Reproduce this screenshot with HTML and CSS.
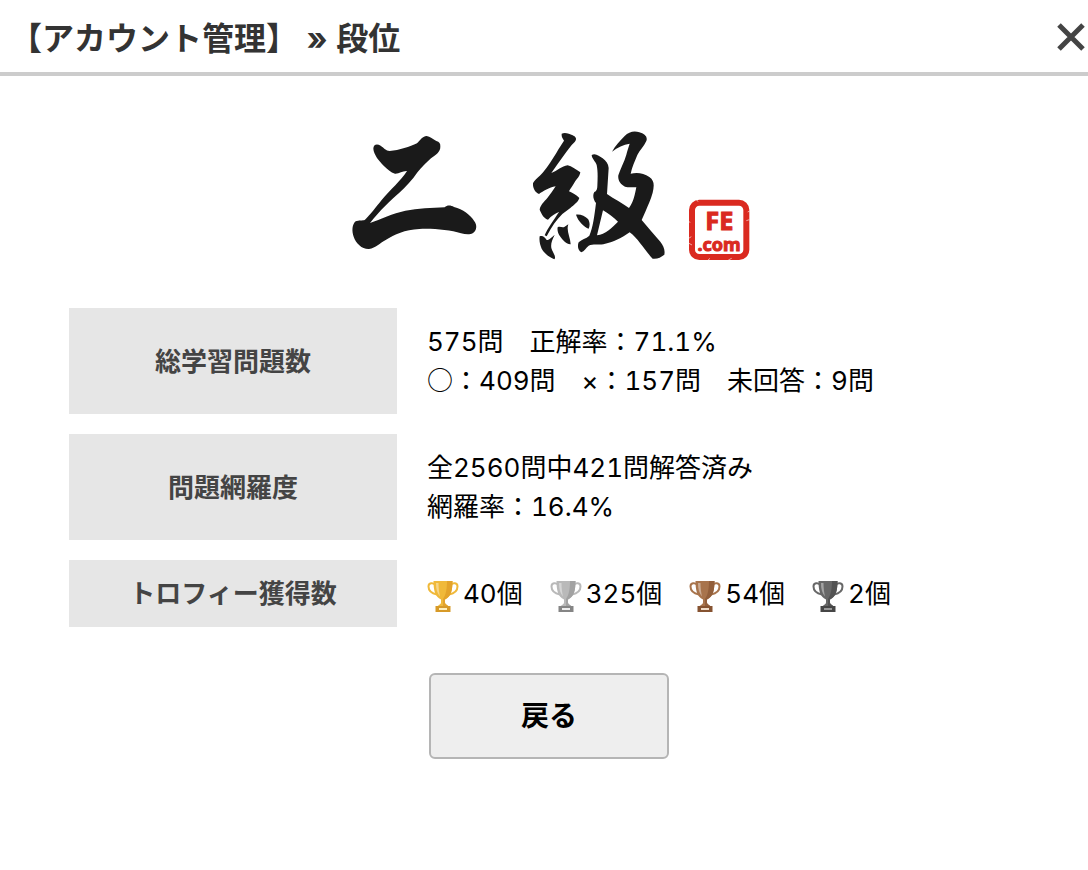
FILE: index.html
```html
<!DOCTYPE html>
<html lang="ja">
<head>
<meta charset="utf-8">
<title>段位</title>
<link rel="stylesheet" href="styles.css">
</head>
<body>
<svg class="defs" aria-hidden="true">
  <symbol id="trophy" viewBox="0 0 32 34">
    <path d="M8 5.500C6 3.500 1.500 3.500 1.500 7.500C1.500 12 5 14.500 10 15.500M24 5.500C26 3.500 30.500 3.500 30.500 7.500C30.500 12 27 14.500 22 15.500" fill="none" stroke="var(--cup)" stroke-width="2"/>
    <path d="M6.500 2H25.500C25.500 11 24 18 18 20.500V23.500C18 25.500 21 26 22 28H10C11 26 14 25.500 14 23.500V20.500C8 18 6.500 11 6.500 2Z" fill="var(--cup)"/>
    <path d="M20 2H25.500C25.500 11 24 18 18 20.500V23.500C18 25.500 21 26 22 28H16V20C19 16 20 9 20 2Z" fill="var(--shade)"/>
    <path d="M9 4C9 10 10 14 13 17.500C12 13 11.500 9 11.500 4Z" fill="#fff" opacity=".4"/>
    <path d="M8.500 27H23.500V33H8.500Z" fill="var(--base)"/>
    <path d="M12 29H20V31H12Z" fill="var(--plate)"/>
  </symbol>
</svg>
<header class="header">
  <h1 class="title">【アカウント管理】 » 段位</h1>
  <button class="close" type="button" aria-label="閉じる">
    <svg viewBox="0 0 28 28" width="28" height="28"><path d="M2 2L26 26M26 2L2 26" stroke="#444" stroke-width="5"/></svg>
  </button>
</header>
<main class="main">
  <svg class="rank" viewBox="0 0 1254 450" role="img" aria-label="二級">
    <g fill="#1a1a1a">
      <path d="M100 86C100 74 110 70 122 77C133 84 137 92 149 93C178 91 210 80 231 70C240 62 246 49 260 48C270 50 279 58 289 63C298 66 302 70 301 80C301 96 288 104 273 115C259 128 246 140 233 156C216 181 197 201 178 218C151 242 119 271 90 309C122 298 158 280 196 272C234 265 275 264 314 262C322 254 333 256 342 261C369 267 391 285 402 302C413 316 410 332 398 340C389 345 375 343 363 340C330 330 280 325 238 327C194 329 164 344 137 360C119 369 108 384 87 387C66 388 48 370 41 350C35 334 36 313 47 304C56 299 68 303 75 299C90 285 108 261 125 240C150 210 184 180 201 153C187 152 178 162 165 161C152 157 142 147 131 137C118 124 101 104 100 86Z"/>
      <g transform="translate(540 0)">
        <path d="M125 41C136 36 148 42 158 46C169 51 171 58 164 66C151 78 143 91 134 103C121 121 107 140 94 159C112 153 125 138 143 136C155 138 167 148 181 157C179 170 170 177 163 188C158 197 151 206 147 214C157 219 169 224 178 234C174 247 162 254 151 264L127 282C110 298 95 320 80 349L74 346C82 326 101 301 117 276C106 280 94 288 84 299C74 297 65 284 59 269C61 256 72 245 82 234C91 223 99 211 107 199C87 202 70 214 57 222C45 218 38 204 39 190C44 178 57 171 68 158C85 139 97 118 109 99C117 84 125 73 132 62C130 56 124 53 125 41Z"/>
        <path d="M59 349C68 345 75 352 80 360C88 361 94 352 104 345C96 360 92 371 94 384C98 398 110 410 103 418C89 412 74 402 65 386C60 374 57 361 59 349ZM113 322C120 317 127 325 134 320L145 313C138 331 151 351 152 373C140 374 129 361 120 349C115 342 111 331 113 322ZM168 284C182 282 195 289 204 297C210 306 210 318 206 326C192 321 174 303 168 284Z"/>
        <path fill-rule="evenodd" d="M215 105C226 98 238 108 248 115C258 122 265 132 266 144L261 222C283 238 307 249 327 264C341 246 345 221 349 202C337 201 325 203 315 200C301 193 293 180 295 166C300 148 313 126 319 104C322 91 326 81 329 71C310 73 293 82 276 95C286 76 301 62 314 48C326 36 342 31 358 37C373 41 384 50 379 63C372 79 359 91 352 105C345 123 336 140 332 161C349 157 371 158 388 171C405 183 402 199 398 218C392 240 383 257 377 273L365 300C384 322 402 344 421 365C430 377 436 389 433 404C423 412 411 418 398 416C373 390 355 356 329 337C305 354 281 366 250 373C235 375 219 371 206 377C198 384 193 393 184 397C175 392 171 379 176 367C185 358 198 356 208 347C219 323 223 289 228 249C220 240 217 224 223 216C230 214 232 207 232 198C233 175 234 154 230 135C226 123 216 117 215 105ZM249 271L231 346C256 343 276 323 294 305C281 292 265 280 249 271Z"/>
      </g>
    </g>
    <g transform="translate(1020 210)">
      <rect x="36" y="38" width="163" height="163" rx="22" fill="none" stroke="#da2a20" stroke-width="18"/>
      <path d="M26 95L31 97M26 145L34 140M27 160L36 165M49 28L54 35M203 66L209 63M199 92L208 89M145 210L155 205M82 212L90 205" stroke="#fff" stroke-width="3" opacity=".6"/>
      <text class="seal"><tspan x="118" y="120">FE</tspan><tspan class="seal-small" x="117" y="182">.com</tspan></text>
    </g>
  </svg>
  <table class="stats">
    <tr><th scope="row">総学習問題数</th><td>575問　正解率：71.1%<br><span class="mark">○</span>：409問　×：157問　未回答：9問</td></tr>
    <tr><th scope="row">問題網羅度</th><td>全2560問中421問解答済み<br>網羅率：16.4%</td></tr>
    <tr><th scope="row">トロフィー獲得数</th><td>
      <ul class="trophies">
        <li class="trophy gold"><svg><use href="#trophy"/></svg>40個</li>
        <li class="trophy silver"><svg><use href="#trophy"/></svg>325個</li>
        <li class="trophy bronze"><svg><use href="#trophy"/></svg>54個</li>
        <li class="trophy black"><svg><use href="#trophy"/></svg>2個</li>
      </ul>
    </td></tr>
  </table>
  <button class="back" type="button">戻る</button>
</main>
</body>
</html>
```
FILE: styles.css
```css
* { box-sizing: border-box; }
body {
  margin: 0;
  background: #fff;
  color: #000;
  font-family: Inter, "Noto Sans CJK JP", sans-serif;
  font-variant-numeric: tabular-nums;
}
.defs { display: none; }
.header {
  display: flex;
  align-items: center;
  justify-content: space-between;
  height: 76px;
  padding: 2px 3px 0 10px;
  border-bottom: 4px solid #ccc;
}
.title {
  margin: 0;
  padding-top: 4px;
  color: #333;
  font-size: 32px;
  line-height: 48px;
  font-weight: 700;
}
.close {
  display: flex;
  padding: 0;
  border: 0;
  background: none;
}
.main {
  display: flex;
  flex-direction: column;
  align-items: center;
  padding: 44px 0 44px 10px;
}
.rank {
  width: 418px;
  height: 150px;
}
.seal {
  fill: #da2a20;
  stroke: #da2a20;
  stroke-width: 3px;
  font: 700 76px "Noto Sans", sans-serif;
  text-anchor: middle;
}
.seal-small { font-size: 54px; }
.stats {
  width: 90%;
  max-width: 960px;
  margin: 18px 0 26px;
  border-spacing: 0 20px;
  table-layout: fixed;
  font-size: 26px;
  line-height: 39px;
}
.stats th {
  width: 328px;
  padding: 14px 10px;
  background: #e6e6e6;
  color: #444;
  font-weight: 700;
}
.stats td { padding: 14px 30px; }
.mark {
  font-family: "Noto Sans CJK JP", sans-serif;
  line-height: 1;
}
.trophies {
  display: flex;
  flex-wrap: wrap;
  column-gap: 27px;
  margin: 0;
  padding: 0;
  list-style: none;
}
.trophy {
  display: flex;
  align-items: center;
  gap: 4px;
}
.trophy svg {
  width: 32px;
  height: 34px;
  margin-top: 4px;
}
.gold { --cup: #f0b93a; --shade: #e3a32b; --base: #d79a28; --plate: #fff0bd; }
.silver { --cup: #b9b9b9; --shade: #a2a2a2; --base: #858585; --plate: #eee; }
.bronze { --cup: #a8744c; --shade: #925f3b; --base: #865331; --plate: #f0dcc8; }
.black { --cup: #686868; --shade: #535353; --base: #464646; --plate: #999; }
.back {
  width: 240px;
  height: 86px;
  padding: 0 0 4px;
  border: 2px solid #b5b5b5;
  border-radius: 6px;
  background: #eee;
  color: #000;
  font: inherit;
  font-size: 28px;
  font-weight: 700;
}
```
